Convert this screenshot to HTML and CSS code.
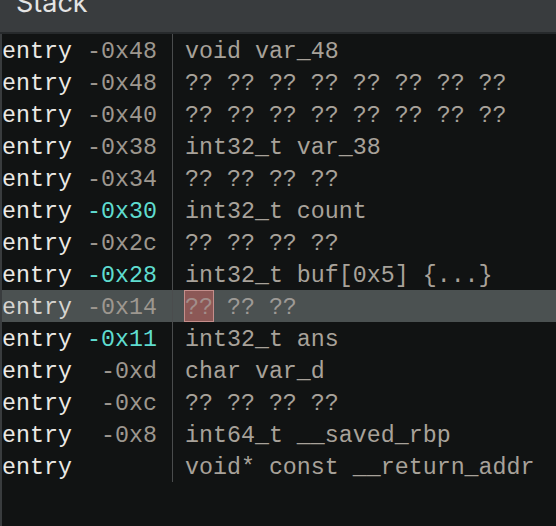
FILE: index.html
```html
<!DOCTYPE html>
<html>
<head>
<meta charset="utf-8">
<link rel="stylesheet" href="styles.css">
</head>
<body>
<div class="panel">
  <div class="header"><div class="title">Stack</div></div>
  <div class="body">
    <div class="rows">
      <div class="row"><div class="left"><span class="fn">entry</span><span class="off">-0x48</span></div><div class="right">void var_48</div></div>
      <div class="row"><div class="left"><span class="fn">entry</span><span class="off">-0x48</span></div><div class="right">?? ?? ?? ?? ?? ?? ?? ??</div></div>
      <div class="row"><div class="left"><span class="fn">entry</span><span class="off">-0x40</span></div><div class="right">?? ?? ?? ?? ?? ?? ?? ??</div></div>
      <div class="row"><div class="left"><span class="fn">entry</span><span class="off">-0x38</span></div><div class="right">int32_t var_38</div></div>
      <div class="row"><div class="left"><span class="fn">entry</span><span class="off">-0x34</span></div><div class="right">?? ?? ?? ??</div></div>
      <div class="row"><div class="left"><span class="fn">entry</span><span class="off hl">-0x30</span></div><div class="right">int32_t count</div></div>
      <div class="row"><div class="left"><span class="fn">entry</span><span class="off">-0x2c</span></div><div class="right">?? ?? ?? ??</div></div>
      <div class="row"><div class="left"><span class="fn">entry</span><span class="off hl">-0x28</span></div><div class="right">int32_t buf[0x5] {...}</div></div>
      <div class="row sel"><div class="left"><span class="fn">entry</span><span class="off">-0x14</span></div><div class="right"><span class="cursor">??</span> ?? ??</div></div>
      <div class="row"><div class="left"><span class="fn">entry</span><span class="off hl">-0x11</span></div><div class="right">int32_t ans</div></div>
      <div class="row"><div class="left"><span class="fn">entry</span><span class="off">-0xd</span></div><div class="right">char var_d</div></div>
      <div class="row"><div class="left"><span class="fn">entry</span><span class="off">-0xc</span></div><div class="right">?? ?? ?? ??</div></div>
      <div class="row"><div class="left"><span class="fn">entry</span><span class="off">-0x8</span></div><div class="right">int64_t __saved_rbp</div></div>
      <div class="row"><div class="left"><span class="fn">entry</span><span class="off"></span></div><div class="right">void* const __return_addr</div></div>
    </div>
  </div>
</div>
</body>
</html>
```

FILE: styles.css
```css
html, body {
  margin: 0;
  padding: 0;
  background: #111313;
}
.panel {
  width: 556px;
  height: 526px;
  display: flex;
  flex-direction: column;
  overflow: hidden;
  background: #111313;
}
.header {
  height: 32px;
  flex: none;
  background: #393c3e;
  border-bottom: 2px solid #26292b;
  overflow: hidden;
}
.title {
  font-family: Inter, "Noto Sans", sans-serif;
  font-size: 27px;
  line-height: 26px;
  color: #e4e4e4;
  margin-top: -10px;
  padding-left: 16px;
}
.body {
  flex: 1;
  border-left: 2px solid #393c3e;
}
.rows {
  display: flex;
  flex-direction: column;
}
.row {
  display: flex;
  height: 32px;
  align-items: stretch;
  font-family: "Liberation Mono", "DejaVu Sans Mono", monospace;
  font-size: 23.3px;
  line-height: 27px;
  white-space: pre;
}
.left {
  width: 155px;
  flex: none;
  display: flex;
  justify-content: space-between;
  padding: 5px 15px 0 0;
}
.fn { color: #ebe9e5; }
.off { color: #9d978f; }
.off.hl { color: #5fdccf; }
.right {
  flex: 1;
  border-left: 1px solid #4a4c4d;
  padding: 5px 0 0 12px;
  color: #a8a29a;
}
.row.sel { background: #4b5151; }
.row.sel .fn { color: #d6d4d0; }
.row.sel .right { color: #9e9a96; }
.cursor {
  display: inline-block;
  vertical-align: top;
  box-sizing: border-box;
  height: 32px;
  margin: -5px -1px 0 -1px;
  padding-top: 4px;
  line-height: 27px;
  background: #8c5856;
  border: 1px solid #c48e8b;
  color: #a28e8b;
}
```
